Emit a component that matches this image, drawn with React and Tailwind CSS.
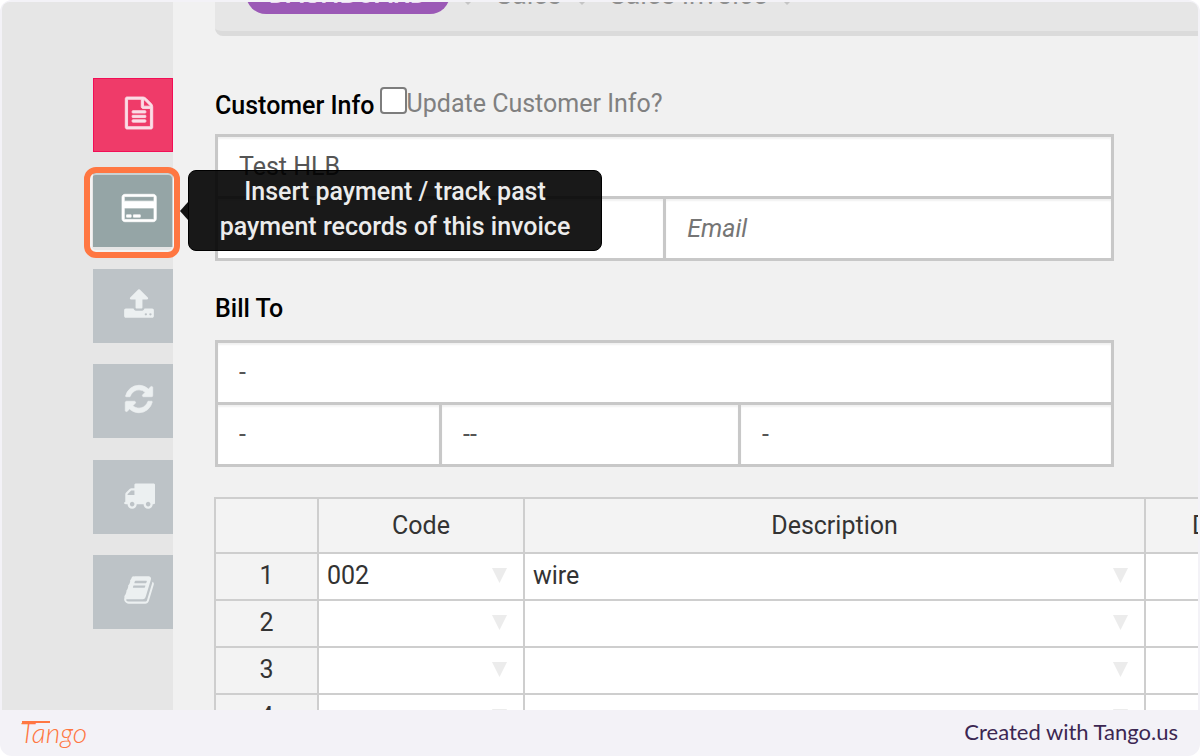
import { useState } from "react";

const icons = {
  file: {
    box: "0 0 1792 1792",
    stroke: 50,
    d: "M1596 380q28 28 48 76t20 88v1152q0 40-28 68t-68 28h-1344q-40 0-68-28t-28-68v-1600q0-40 28-68t68-28h896q40 0 88 20t76 48zm-444-244v376h376q-10-29-22-41l-313-313q-12-12-41-22zm384 1528v-1024h-416q-40 0-68-28t-28-68v-416h-768v1536h1280zm-1024-864q0-14 9-23t23-9h704q14 0 23 9t9 23v64q0 14-9 23t-23 9h-704q-14 0-23-9t-9-23v-64zm736 224q14 0 23 9t9 23v64q0 14-9 23t-23 9h-704q-14 0-23-9t-9-23v-64q0-14 9-23t23-9h704zm0 256q14 0 23 9t9 23v64q0 14-9 23t-23 9h-704q-14 0-23-9t-9-23v-64q0-14 9-23t23-9h704z",
  },
  card: {
    box: "0 -128 1920 1792",
    stroke: 40,
    d: "M1760 0q66 0 113 47t47 113v1216q0 66-47 113t-113 47h-1600q-66 0-113-47t-47-113v-1216q0-66 47-113t113-47h1600zm-1600 128q-13 0-22.5 9.5t-9.5 22.5v224h1664v-224q0-13-9.5-22.5t-22.5-9.5h-1600zm1600 1280q13 0 22.5-9.5t9.5-22.5v-608h-1664v608q0 13 9.5 22.5t22.5 9.5h1600zm-1504-128v-128h256v128h-256zm384 0v-128h384v128h-384z",
  },
  upload: {
    box: "0 0 1792 1792",
    stroke: 0,
    d: "M1344 1472q0-26-19-45t-45-19-45 19-19 45 19 45 45 19 45-19 19-45zm256 0q0-26-19-45t-45-19-45 19-19 45 19 45 45 19 45-19 19-45zm128-224v320q0 40-28 68t-68 28h-1472q-40 0-68-28t-28-68v-320q0-40 28-68t68-28h427q21 56 70.5 92t110.5 36h256q61 0 110.5-36t70.5-92h427q40 0 68 28t28 68zm-325-648q-17 40-59 40h-256v448q0 26-19 45t-45 19h-256q-26 0-45-19t-19-45v-448h-256q-42 0-59-40-17-39 14-69l448-448q18-19 45-19t45 19l448 448q31 30 14 69z",
  },
  refresh: {
    box: "0 0 1792 1792",
    stroke: 40,
    d: "M1639 1056q0 5-1 7-64 268-268 434.5t-478 166.5q-146 0-282.5-55t-243.5-157l-129 129q-19 19-45 19t-45-19-19-45v-448q0-26 19-45t45-19h448q26 0 45 19t19 45-19 45l-137 137q71 66 161 102t187 36q134 0 250-65t186-179q11-17 53-117 8-23 30-23h192q13 0 22.5 9.5t9.5 22.5zm25-800v448q0 26-19 45t-45 19h-448q-26 0-45-19t-19-45 19-45l138-138q-148-137-349-137-134 0-250 65t-186 179q-11 17-53 117-8 23-30 23h-199q-13 0-22.5-9.5t-9.5-22.5v-7q65-268 270-434.5t480-166.5q146 0 284 55.5t245 156.5l130-129q19-19 45-19t45 19 19 45z",
  },
  truck: {
    box: "0 0 1792 1792",
    stroke: 0,
    d: "M640 1408q0-52-38-90t-90-38-90 38-38 90 38 90 90 38 90-38 38-90zm-384-512h384v-256h-158q-13 0-22 9l-195 195q-9 9-9 22v30zm1280 512q0-52-38-90t-90-38-90 38-38 90 38 90 90 38 90-38 38-90zm256-1088v1024q0 15-4 26.5t-13.5 18.5-16.5 11.5-23.5 6-22.5 2-25.5 0-22.5-.5q0 106-75 181t-181 75-181-75-75-181h-384q0 106-75 181t-181 75-181-75-75-181h-64q-3 0-22.5.5t-25.5 0-22.5-2-23.5-6-16.5-11.5-13.5-18.5-4-26.5q0-26 19-45t45-19v-320q0-8-.5-35t0-38 2.5-34.5 6.5-37 14-30.5 22.5-30l198-198q19-19 50.5-32t58.5-13h160v-192q0-26 19-45t45-19h1024q26 0 45 19t19 45z",
  },
  book: {
    box: "0 0 1792 1792",
    stroke: 0,
    d: "M1703 478q40 57 18 129l-275 906q-19 64-76.5 107.5t-122.5 43.5h-923q-77 0-148.5-53.5t-99.5-131.5q-24-67-2-127 0-4 3-27t4-37q1-8-3-21.5t-3-19.5q2-11 8-21t16.5-23.5 16.5-23.5q23-38 45-91.5t30-91.5q3-10 .5-30t-.5-28q3-11 17-28t17-23q21-36 42-92t25-90q1-9-2.5-32t.5-28q4-13 22-30.5t22-22.5q19-26 42.5-84.5t27.5-96.5q1-8-3-25.5t-2-26.5q2-8 9-18t18-23 17-21q8-12 16.5-30.5t15-35 16-36 19.5-32 26.5-23.5 36-11.5 47.5 5.5l-1 3q38-9 51-9h761q74 0 114 56t18 130l-274 906q-36 119-71.5 153.5t-128.5 34.5h-869q-27 0-38 15-11 16-1 43 24 70 144 70h923q29 0 56-15.5t35-41.5l300-987q7-22 5-57 38 15 59 43zm-1064 2q-4 13 2 22.5t20 9.5h608q13 0 25.5-9.5t16.5-22.5l21-64q4-13-2-22.5t-20-9.5h-608q-13 0-25.5 9.5t-16.5 22.5zm-83 256q-4 13 2 22.5t20 9.5h608q13 0 25.5-9.5t16.5-22.5l21-64q4-13-2-22.5t-20-9.5h-608q-13 0-25.5 9.5t-16.5 22.5z",
  },
};

const tiles = [
  { icon: "file", label: "Invoice", style: "bg-[#ef3b69] border border-[#f20d56] text-[#fbdde6]" },
  { icon: "card", label: "Payment", style: "bg-[#95a5a6] text-white", active: true },
  { icon: "upload", label: "Upload", style: "bg-[#bdc3c7] text-[#ecf0f1]" },
  { icon: "refresh", label: "Refresh", style: "bg-[#bdc3c7] text-[#ecf0f1]" },
  { icon: "truck", label: "Delivery", style: "bg-[#bdc3c7] text-[#ecf0f1]" },
  { icon: "book", label: "Ledger", style: "bg-[#bdc3c7] text-[#ecf0f1]" },
];

const rows = [
  { code: "002", description: "wire" },
  { code: "", description: "" },
  { code: "", description: "" },
  { code: "", description: "" },
];

function Icon({ name }) {
  return (
    <svg
      viewBox={icons[name].box}
      className="h-8 overflow-visible"
      fill="currentColor"
      stroke="currentColor"
      strokeWidth={icons[name].stroke}
      aria-hidden="true"
    >
      <path d={icons[name].d} />
    </svg>
  );
}

function Tooltip() {
  return (
    <div
      role="tooltip"
      className="absolute left-[95px] -top-[3px] z-20 w-[414px] rounded-lg border border-black bg-black/90 pt-[3px] pb-[6px] text-center text-[25px] leading-[35px] font-medium text-[#ececec]"
    >
      <svg viewBox="0 0 8 18" className="absolute -left-[9px] top-[31px] w-2" aria-hidden="true">
        <path d="M8 0v18L0 9z" fill="#111" />
      </svg>
      Insert payment / track past
      <br />
      payment records of this invoice
    </div>
  );
}

function Sidebar() {
  return (
    <aside className="w-[171px] shrink-0 bg-[#e6e6e6] pt-[76px]">
      <nav className="flex h-[551px] flex-col items-end justify-between">
        {tiles.map((tile) => (
          <div key={tile.icon} className="relative">
            <button
              aria-label={tile.label}
              className={`flex h-[74px] w-20 items-center justify-center pb-1 pl-3 ${tile.style}`}
            >
              <Icon name={tile.icon} />
            </button>
            {tile.active && (
              <>
                <div className="pointer-events-none absolute -top-[6px] -right-[7px] -bottom-[11px] -left-[9px] z-10 rounded-xl border-6 border-[#ff7742] shadow-[inset_0_0_0_2px_rgba(255,255,255,0.5)]" />
                <Tooltip />
              </>
            )}
          </div>
        ))}
      </nav>
    </aside>
  );
}

function Separator() {
  return (
    <svg viewBox="0 0 8 8" className="mr-2 mb-[26px] w-2" fill="#c4c4c4" aria-hidden="true">
      <path d="M4 0l4 4-4 4-4-4z" />
    </svg>
  );
}

function Breadcrumb() {
  return (
    <nav className="flex h-[34px] items-end overflow-hidden rounded-bl-lg border-b-5 border-[#dbdbdb] bg-[#e6e6e6] pl-[31px] text-[27px] leading-7">
      <a href="#" className="mb-[17px] w-[204px] rounded-[20px] bg-[#9b59b6] pt-2 pb-[6px] text-center font-medium text-[#e9d6f1]">
        DASHBOARD
      </a>
      <div className="flex items-end gap-4 pl-[14px] text-[#8f8f8f]">
        <Separator />
        <a href="#" className="mb-[22px]">Sales</a>
        <Separator />
        <a href="#" className="mb-[22px]">Sales Invoice</a>
        <Separator />
      </div>
    </nav>
  );
}

function Field({ label, className = "", ...props }) {
  return (
    <input
      aria-label={label}
      className={`h-[59px] w-full min-w-0 bg-white pl-[21px] text-[25px] text-[#555] shadow-[inset_0_2px_2px_rgba(0,0,0,0.06)] outline-none placeholder:text-[#757575] placeholder:italic ${className}`}
      {...props}
    />
  );
}

function Caret({ label }) {
  return (
    <button aria-label={label} className="p-2">
      <svg viewBox="0 0 15 15" className="w-[15px]" aria-hidden="true">
        <path d="M0 0h15L7.5 15z" fill="#ececec" />
      </svg>
    </button>
  );
}

function Cell({ value, label }) {
  return (
    <td className="border-2 border-[#cecece] bg-white p-0 pb-[2px]">
      <div className="flex items-center justify-between pr-2 pl-2">
        <span>{value}</span>
        <Caret label={label} />
      </div>
    </td>
  );
}

function ItemsTable() {
  return (
    <table className="w-full table-fixed border-collapse text-[25px] leading-7 text-[#333]">
      <thead>
        <tr className="h-[55px]">
          <th className="w-[103px] border-2 border-[#cecece] bg-[#f3f3f3]"></th>
          <th className="w-[206px] border-2 border-[#cecece] bg-[#f3f3f3] font-normal">Code</th>
          <th className="border-2 border-[#cecece] bg-[#f3f3f3] font-normal">Description</th>
          <th className="w-[53px] overflow-hidden border-2 border-r-0 border-[#cecece] bg-[#f3f3f3] p-0 pl-[46px] text-left font-normal">D</th>
        </tr>
      </thead>
      <tbody>
        {rows.map((row, i) => (
          <tr key={i} className="h-[47px]">
            <th className="border-2 border-[#cecece] bg-[#f3f3f3] p-0 pb-[2px] font-normal">{i + 1}</th>
            <Cell value={row.code} label="Choose code" />
            <Cell value={row.description} label="Choose description" />
            <td className="border-2 border-r-0 border-[#cecece] bg-white"></td>
          </tr>
        ))}
      </tbody>
    </table>
  );
}

export default function App() {
  const [update, setUpdate] = useState(false);

  return (
    <div className="flex h-screen flex-col overflow-hidden rounded-xl bg-[#f3f2f7] font-['Roboto',sans-serif]">
      <div className="mx-[2px] mt-[2px] flex min-h-0 flex-1 overflow-hidden rounded-t-lg bg-[#f1f1f1]">
        <Sidebar />
        <main className="min-w-0 flex-1 pl-[42px]">
          <Breadcrumb />

          <div className="mt-[50px] flex h-9 items-center">
            <h2 className="pt-1 text-[25px] leading-8 font-medium text-black">Customer Info</h2>
            <input
              id="update"
              type="checkbox"
              checked={update}
              onChange={(e) => setUpdate(e.target.checked)}
              className="mb-2 ml-[5px] size-[27px] appearance-none rounded border-2 border-[#7d7d7d] bg-white checked:bg-blue-600"
            />
            <label htmlFor="update" className="text-[25px] leading-8 text-[#808080]">
              Update Customer Info?
            </label>
          </div>
          <div className="mt-3 grid w-[91.5%] grid-cols-2 gap-[3px] bg-[#c8c8c8] p-[3px]">
            <div className="col-span-2">
              <Field label="Customer name" defaultValue="Test HLB" />
            </div>
            <Field label="Phone" />
            <Field label="Email" placeholder="Email" type="email" />
          </div>

          <h2 className="mt-8 text-[25px] leading-8 font-medium text-black">Bill To</h2>
          <div className="mt-[15px] grid w-[91.5%] grid-cols-12 gap-[3px] bg-[#c8c8c8] p-[3px]">
            <Field label="Address" defaultValue="-" className="col-span-12" />
            <Field label="Postcode" defaultValue="-" className="col-span-3" />
            <Field label="City" defaultValue="--" className="col-span-4" />
            <Field label="Country" defaultValue="-" className="col-span-5" />
          </div>

          <div className="mt-[30px] -ml-px">
            <ItemsTable />
          </div>
        </main>
      </div>

      <footer className="flex h-[46px] shrink-0 items-center justify-between pr-[22px] pb-[3px] pl-5">
        <a href="#" className="relative font-['Lato',sans-serif] text-[28px] leading-7 font-light text-[#ff7742] italic">
          Tango
          <span className="absolute top-[3px] left-[2px] h-[2px] w-7 bg-[#ff7742]" />
        </a>
        <p className="font-['Lato',sans-serif] text-[22px] text-[#3c2752]">Created with Tango.us</p>
      </footer>
    </div>
  );
}
